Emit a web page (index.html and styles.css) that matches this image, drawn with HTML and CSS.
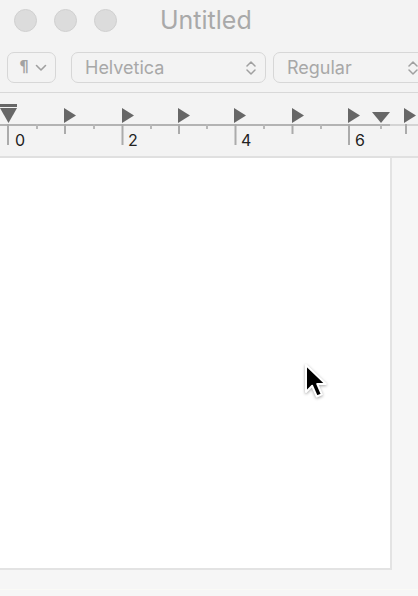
FILE: index.html
```html
<!DOCTYPE html>
<html lang="en">
<head>
    <meta charset="UTF-8">
    <meta name="viewport" content="width=device-width, initial-scale=1.0">
    <title>Untitled</title>
    <link rel="stylesheet" href="styles.css">
</head>
<body>

    <div class="window">
        <header class="titlebar">
            <div class="lights">
                <span class="light"></span>
                <span class="light"></span>
                <span class="light"></span>
            </div>
            <h1 class="title">Untitled</h1>
        </header>

        <div class="toolbar">
            <div class="control para-btn">
                <span class="pilcrow">¶</span>
                <svg class="chevron" width="12" height="8" viewBox="0 0 12 8">
                    <path d="M1.5 1.5 L6 6 L10.5 1.5" fill="none" stroke="#a0a0a0" stroke-width="1.6" stroke-linecap="round" stroke-linejoin="round"/>
                </svg>
            </div>
            <div class="control select font-select">
                <span class="select-text">Helvetica</span>
                <svg class="updown" width="12" height="16" viewBox="0 0 12 16">
                    <path d="M2 6 L6 2 L10 6 M2 10 L6 14 L10 10" fill="none" stroke="#a0a0a0" stroke-width="1.5" stroke-linecap="round" stroke-linejoin="round"/>
                </svg>
            </div>
            <div class="control select style-select">
                <span class="select-text">Regular</span>
                <svg class="updown" width="12" height="16" viewBox="0 0 12 16">
                    <path d="M2 6 L6 2 L10 6 M2 10 L6 14 L10 10" fill="none" stroke="#a0a0a0" stroke-width="1.5" stroke-linecap="round" stroke-linejoin="round"/>
                </svg>
            </div>
        </div>

        <div class="ruler">
            <svg class="ruler-svg" width="418" height="63" viewBox="0 0 418 63">
                <!-- baseline -->
                <rect x="0" y="31" width="390" height="2" fill="#b3b3b3"/>
                <rect x="390" y="31" width="28" height="2" fill="#d4d4d4"/>

                <!-- inch ticks -->
                <g fill="#ababab">
                    <rect x="7" y="31" width="2" height="21"/>
                    <rect x="121.5" y="31" width="2" height="21"/>
                    <rect x="234.5" y="31" width="2" height="21"/>
                    <rect x="348" y="31" width="2" height="21"/>
                </g>
                <!-- half inch ticks -->
                <g fill="#ababab">
                    <rect x="64" y="31" width="2" height="10"/>
                    <rect x="178" y="31" width="2" height="10"/>
                    <rect x="291.5" y="31" width="2" height="10"/>
                    <rect x="405" y="31" width="2" height="10"/>
                </g>
                <!-- quarter ticks -->
                <g fill="#b8b8b8">
                    <rect x="36" y="31" width="2" height="5"/>
                    <rect x="93" y="31" width="2" height="5"/>
                    <rect x="150" y="31" width="2" height="5"/>
                    <rect x="206" y="31" width="2" height="5"/>
                    <rect x="263" y="31" width="2" height="5"/>
                    <rect x="320" y="31" width="2" height="5"/>
                    <rect x="380" y="31" width="2" height="5"/>
                </g>

                <!-- tab stops -->
                <g fill="#676767">
                    <path d="M64 15 L76 22.5 L64 30 Z"/>
                    <path d="M122 15 L134 22.5 L122 30 Z"/>
                    <path d="M178 15 L190 22.5 L178 30 Z"/>
                    <path d="M234 15 L246 22.5 L234 30 Z"/>
                    <path d="M292 15 L304 22.5 L292 30 Z"/>
                    <path d="M348 15 L360 22.5 L348 30 Z"/>
                    <path d="M404 15 L416 22.5 L404 30 Z"/>
                    <!-- right margin -->
                    <path d="M372 19 L390 19 L381 30 Z"/>
                    <!-- left indent -->
                    <rect x="0" y="11" width="17" height="3"/>
                    <path d="M0 15 L17 15 L8.5 30 Z"/>
                </g>

                <g class="ruler-num">
                    <text x="15" y="53">0</text>
                    <text x="128" y="53">2</text>
                    <text x="241" y="53">4</text>
                    <text x="355" y="53">6</text>
                </g>
            </svg>
        </div>

        <main class="document">
            <div class="page"></div>
        </main>
    </div>

    <svg class="cursor" width="28" height="42" viewBox="0 0 28 42">
        <path d="M2 1 L2 28 L8.2 21.8 L12.8 32.5 L17.8 30.3 L13.3 20 L21.8 20 Z" fill="#000" stroke="#fff" stroke-width="2" stroke-linejoin="round"/>
    </svg>

</body>
</html>
```

FILE: styles.css
```css
body {
    margin: 0;
    width: 418px;
    height: 596px;
    overflow: hidden;
    background-color: #f6f6f6;
    font-family: 'Inter', 'Liberation Sans', sans-serif;
    position: relative;
}

.window {
    display: flex;
    flex-direction: column;
    height: 596px;
}

/* title bar */
.titlebar {
    height: 40px;
    display: flex;
    align-items: center;
    background-color: #f3f3f3;
}

.lights {
    display: flex;
    gap: 17px;
    padding-left: 14px;
}

.light {
    width: 21px;
    height: 21px;
    border-radius: 50%;
    background-color: #dcdcdc;
    border: 1px solid #d0d0d0;
}

.title {
    margin: 0 0 0 43px;
    font-size: 25px;
    font-weight: 400;
    color: #a9a9a9;
    line-height: 1;
    padding-top: 1px;
}

/* toolbar */
.toolbar {
    height: 40px;
    padding: 12px 0 0 7px;
    display: flex;
    gap: 7px;
    background-color: #f3f3f3;
    border-bottom: 1px solid #d8d8d8;
    overflow: hidden;
}

.control {
    height: 29px;
    border: 1px solid #d7d7d7;
    border-radius: 7px;
    display: flex;
    align-items: center;
    flex-shrink: 0;
    box-sizing: content-box;
}

.para-btn {
    width: 47px;
    margin-right: 8px;
    justify-content: center;
    gap: 6px;
}

.pilcrow {
    font-family: 'DejaVu Sans', sans-serif;
    font-size: 15px;
    font-weight: bold;
    color: #a2a2a2;
    padding-left: 3px;
    padding-bottom: 1px;
}

.select {
    justify-content: space-between;
    padding: 0 8px 0 13px;
    width: 172px;
}

.select-text {
    font-size: 18px;
    color: #a8a8a8;
}

.style-select {
    width: 132px;
}

/* ruler */
.ruler {
    height: 63px;
    background-color: #f3f3f3;
    border-bottom: 2px solid #e0e0e0;
}

.ruler-svg {
    display: block;
}

.ruler-num text {
    font-family: 'Inter', 'Liberation Sans', sans-serif;
    font-size: 16px;
    fill: #222222;
}

/* document */
.document {
    flex: 1;
    background-color: #f6f6f6;
    border-bottom: 1px solid #fafaf6;
    margin-bottom: 6px;
}

.page {
    width: 390px;
    height: 410px;
    background-color: #ffffff;
    border-right: 2px solid #e3e3e3;
    border-bottom: 2px solid #e3e3e3;
}

.cursor {
    position: absolute;
    left: 304px;
    top: 364px;
    filter: drop-shadow(0 1px 1.5px rgba(0, 0, 0, 0.35));
}
```
